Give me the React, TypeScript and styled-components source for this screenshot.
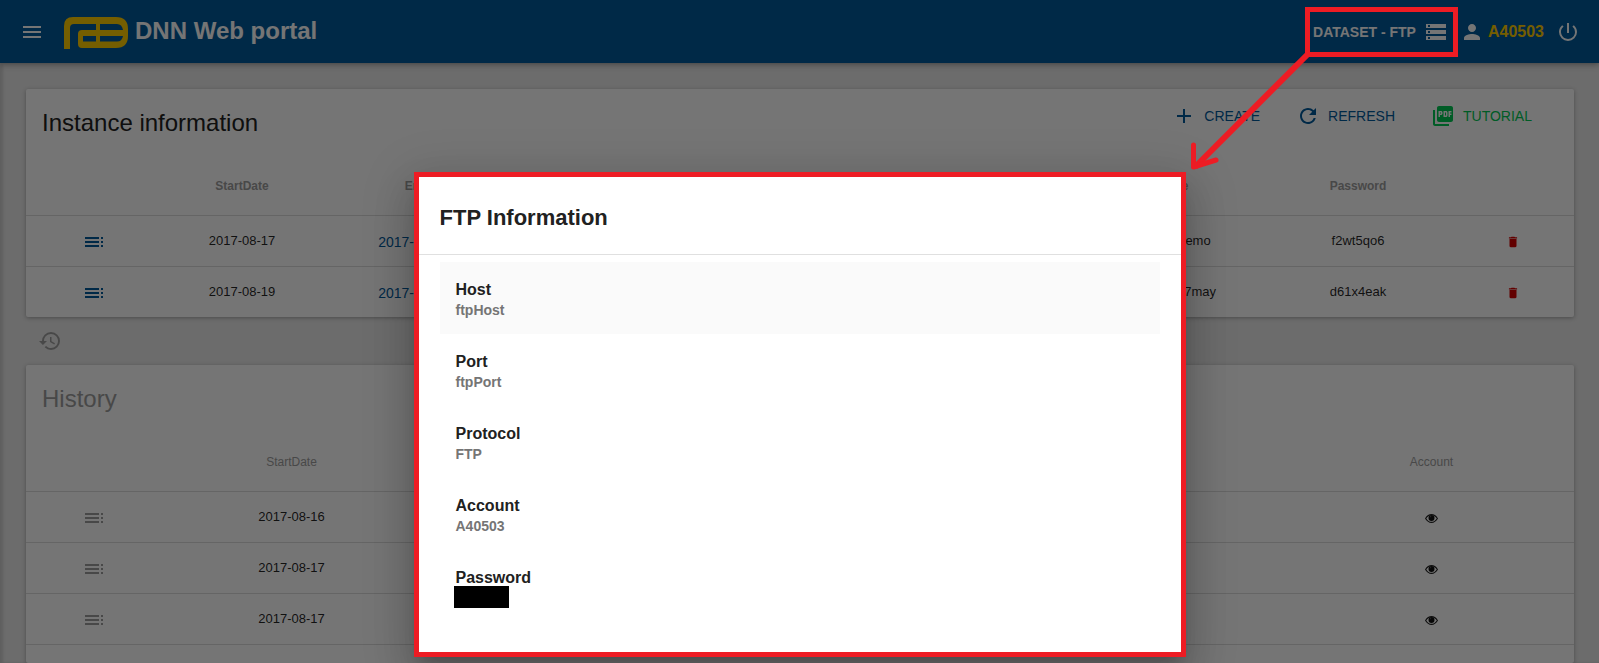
import React from "react";
import styled, { createGlobalStyle } from "styled-components";
import {
  MdMenu, MdStorage, MdPerson, MdPowerSettingsNew, MdAdd, MdRefresh,
  MdPictureAsPdf, MdToc, MdHistory, MdDelete,
} from "react-icons/md";

const BLUE = "#005a9c";
const RED = "#ed1c24";

const GlobalStyle = createGlobalStyle`
  *, *::before, *::after { box-sizing: border-box; }
  body {
    margin: 0;
    overflow: hidden;
    font-family: "Liberation Sans", Arial, sans-serif;
    color: rgba(0, 0, 0, 0.87);
    background: #ebebeb;
  }
  button { font: inherit; color: inherit; background: none; border: 0; padding: 0; cursor: pointer; }
`;

const Page = styled.div`
  position: relative;
  display: flex;
  flex-direction: column;
  height: 100vh;
  overflow: hidden;
`;

const TopBar = styled.header`
  display: flex;
  flex: none;
  align-items: center;
  height: 63px;
  padding: 0 19px 0 20px;
  background: ${BLUE};
  color: #fff;
  box-shadow: 0 2px 6px rgba(0, 0, 0, 0.3);
  z-index: 1;
`;

const IconButton = styled.button`
  display: flex;
  align-items: center;
  justify-content: center;
  svg { display: block; }
`;

const Brand = styled.h1`
  display: flex;
  align-items: center;
  gap: 7px;
  margin: 0 auto 2px 20px;
  font-size: 24px;
  line-height: 32px;
  color: #fff;
  svg { margin-top: 4px; }
`;

const DatasetButton = styled.button`
  display: flex;
  align-items: center;
  gap: 8px;
  && { font-size: 14px; font-weight: 700; }
`;

const User = styled.span`
  display: flex;
  align-items: center;
  gap: 4px;
  margin: 0 12px;
  font-size: 16px;
  font-weight: 700;
  strong { color: #fc0; }
`;

const Main = styled.main`
  display: flex;
  flex: 1;
  flex-direction: column;
  padding: 26px 25px 0 26px;
  box-shadow: inset 3px 0 3px rgba(0, 0, 0, 0.12);
`;

const Card = styled.section<{ $grow?: boolean }>`
  flex: ${(p) => (p.$grow ? "1" : "none")};
  background: #fff;
  border-radius: 2px;
  box-shadow: 0 1px 4px rgba(0, 0, 0, 0.3);
`;

const CardHead = styled.div`
  display: flex;
  justify-content: space-between;
  height: 71px;
  padding: 15px 42px 0 16px;
`;

const CardTitle = styled.h2<{ $muted?: boolean }>`
  margin: 0;
  font-size: 24px;
  font-weight: 400;
  line-height: 38px;
  color: ${(p) => (p.$muted ? "#9e9e9e" : "#212121")};
`;

const Actions = styled.div`
  display: flex;
  gap: 36px;
  height: 24px;
`;

const Action = styled.button<{ $color: string }>`
  display: flex;
  align-items: center;
  gap: 8px;
  && { font-size: 14px; color: ${(p) => p.$color}; }
`;

const Table = styled.table`
  width: 100%;
  table-layout: fixed;
  border-collapse: collapse;
  font-size: 13px;
`;

const Th = styled.th<{ $bold?: boolean }>`
  height: 55px;
  padding: 0 0 3px;
  border-bottom: 1px solid #ddd;
  font-size: 12px;
  font-weight: ${(p) => (p.$bold ? 700 : 400)};
  color: #9e9e9e;
`;

const Tr = styled.tr<{ $lined?: boolean }>`
  td { border-bottom: ${(p) => (p.$lined ? "1px solid #ddd" : "0")}; }
`;

const Td = styled.td`
  height: 51px;
  padding: 0 0 1px;
  text-align: center;
`;

const CellButton = styled(IconButton)<{ $color: string }>`
  margin: 4px auto 0;
  && { color: ${(p) => p.$color}; }
`;

const DateLink = styled.a`
  display: block;
  padding: 4px 30px 0 0;
  font-size: 14px;
  color: ${BLUE};
  text-decoration: none;
`;

const HistoryToggle = styled(IconButton)`
  margin: 12px 0 12px 12px;
  width: 24px;
  height: 24px;
  && { color: #9e9e9e; }
`;

const Backdrop = styled.div`
  position: absolute;
  inset: 0;
  z-index: 2;
  display: flex;
  justify-content: center;
  align-items: flex-start;
  padding-top: 172px;
  background: rgba(0, 0, 0, 0.54);
`;

const Dialog = styled.div`
  width: 772px;
  max-width: 100%;
  border: 5px solid ${RED};
  background: #fff;
  padding-bottom: 30px;
  box-shadow: 0 11px 15px -7px rgba(0, 0, 0, 0.2), 0 24px 38px 3px rgba(0, 0, 0, 0.14),
    0 9px 46px 8px rgba(0, 0, 0, 0.12);
`;

const DialogTitle = styled.h2`
  margin: 0 0 7px;
  padding: 27px 21px 22px;
  border-bottom: 1px solid #e0e0e0;
  font-size: 22px;
  line-height: 28px;
  color: #212121;
`;

const InfoList = styled.dl`
  margin: 0 21px;
`;

const InfoItem = styled.div<{ $active?: boolean }>`
  height: 72px;
  padding: 17px 16px 0;
  background: ${(p) => (p.$active ? "#fafafa" : "transparent")};
  font-weight: 700;
  dt { font-size: 16px; line-height: 22px; color: #212121; }
  dd { margin: 0; font-size: 14px; line-height: 18px; color: #757575; }
`;

const Redaction = styled.span`
  display: block;
  width: 55px;
  height: 22px;
  margin: -3px 0 0 -2px;
  background: #000;
`;

const Callout = styled.svg`
  position: absolute;
  top: 0;
  right: 0;
  z-index: 3;
  pointer-events: none;
`;

const Logo = () => (
  <svg width="64" height="32" viewBox="0 0 64 32" fill="#fc0" fillRule="evenodd" aria-hidden="true">
    <path d="M0 32V9Q0 0 9 0H52Q64 0 64 12V19Q64 31 52 31H18Q14 31 14 27V17Q14 13 18 13H32V7H10Q6 7 6 11V32ZM36 7V13H59Q58 7 53 7ZM19 19V24.500H32V19ZM36 19V24.500H53Q58 24.500 59 19Z" />
  </svg>
);

const Eye = () => (
  <svg width="13" height="9" viewBox="0 0 13 9" aria-hidden="true">
    <path d="M.6 4.500Q3 .6 6.500 .6T12.400 4.500Q10 8.400 6.500 8.400T.6 4.500Z" fill="none" stroke="#212121" strokeWidth="1.100" />
    <circle cx="6.500" cy="3.900" r="3" fill="#111" />
    <path d="M5.200 3.200Q5.400 2.500 6.100 2.300" fill="none" stroke="#aaa" strokeWidth=".6" />
  </svg>
);

const instances = [
  { start: "2017-08-17", end: "2017-08-31", name: "A40503demo", password: "f2wt5qo6" },
  { start: "2017-08-19", end: "2017-08-31", name: "A40503-17may", password: "d61x4eak" },
];
const history = ["2017-08-16", "2017-08-17", "2017-08-17"];
const ftpInfo = [
  ["Host", "ftpHost"],
  ["Port", "ftpPort"],
  ["Protocol", "FTP"],
  ["Account", "A40503"],
  ["Password", null],
] as const;

export default function App() {
  return (
    <Page>
      <GlobalStyle />
      <TopBar>
        <IconButton aria-label="Menu"><MdMenu size={24} /></IconButton>
        <Brand><Logo />DNN Web portal</Brand>
        <DatasetButton>DATASET - FTP<MdStorage size={24} /></DatasetButton>
        <User><MdPerson size={24} /><strong>A40503</strong></User>
        <IconButton aria-label="Log out"><MdPowerSettingsNew size={24} /></IconButton>
      </TopBar>

      <Main>
        <Card>
          <CardHead>
            <CardTitle>Instance information</CardTitle>
            <Actions>
              <Action $color={BLUE}><MdAdd size={24} />CREATE</Action>
              <Action $color={BLUE}><MdRefresh size={24} />REFRESH</Action>
              <Action $color="#00c853"><MdPictureAsPdf size={24} />TUTORIAL</Action>
            </Actions>
          </CardHead>
          <Table>
            <colgroup>
              <col width="135" /><col width="162" /><col width="212" /><col />
              <col width="186" /><col width="186" /><col width="123" />
            </colgroup>
            <thead>
              <tr>
                <Th $bold /><Th $bold>StartDate</Th><Th $bold>EndDate</Th><Th $bold />
                <Th $bold>Name</Th><Th $bold>Password</Th><Th $bold />
              </tr>
            </thead>
            <tbody>
              {instances.map((row, i) => (
                <Tr key={row.start} $lined={i < instances.length - 1}>
                  <Td><CellButton $color={BLUE} aria-label="Details"><MdToc size={24} /></CellButton></Td>
                  <Td>{row.start}</Td>
                  <Td><DateLink href="#">{row.end}</DateLink></Td>
                  <Td />
                  <Td>{row.name}</Td>
                  <Td>{row.password}</Td>
                  <Td><CellButton $color="#d50000" aria-label="Delete"><MdDelete size={14} /></CellButton></Td>
                </Tr>
              ))}
            </tbody>
          </Table>
        </Card>

        <HistoryToggle aria-label="Toggle history"><MdHistory size={24} /></HistoryToggle>

        <Card $grow>
          <CardHead><CardTitle $muted>History</CardTitle></CardHead>
          <Table>
            <colgroup>
              <col width="135" /><col width="261" /><col /><col width="285" />
            </colgroup>
            <thead>
              <tr><Th /><Th>StartDate</Th><Th /><Th>Account</Th></tr>
            </thead>
            <tbody>
              {history.map((start, i) => (
                <Tr key={i} $lined>
                  <Td><CellButton $color="#9e9e9e" aria-label="Details"><MdToc size={24} /></CellButton></Td>
                  <Td>{start}</Td>
                  <Td />
                  <Td><CellButton $color="#212121" aria-label="Show account"><Eye /></CellButton></Td>
                </Tr>
              ))}
            </tbody>
          </Table>
        </Card>
      </Main>

      <Backdrop>
        <Dialog role="dialog" aria-modal="true" aria-labelledby="ftp-title">
          <DialogTitle id="ftp-title">FTP Information</DialogTitle>
          <InfoList>
            {ftpInfo.map(([label, value], i) => (
              <InfoItem key={label} $active={i === 0}>
                <dt>{label}</dt>
                <dd>{value ?? <Redaction />}</dd>
              </InfoItem>
            ))}
          </InfoList>
        </Dialog>
      </Backdrop>

      <Callout width="420" height="180" viewBox="0 0 420 180" fill="none" stroke={RED} aria-hidden="true">
        <rect x="128.500" y="9.500" width="148" height="45" strokeWidth="5" />
        <path d="M128 55L16 167" strokeWidth="6" />
        <path d="M14.500 145V167L37 160" strokeWidth="5" strokeLinecap="round" strokeLinejoin="round" />
      </Callout>
    </Page>
  );
}
